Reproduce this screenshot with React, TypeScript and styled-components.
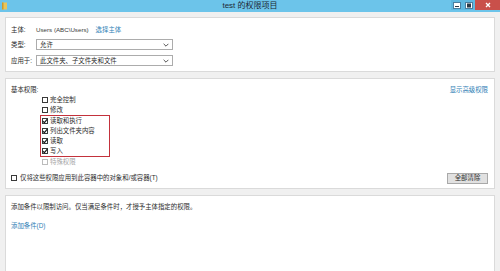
import React from 'react';
import styled, { createGlobalStyle } from 'styled-components';

const GlobalStyle = createGlobalStyle`
    html, body {
        margin: 0;
        padding: 0;
        background: #f0f0f0;
    }
    * {
        box-sizing: border-box;
    }
`

type PermissionType = {
    label: string
    checked: boolean
    disabled?: boolean
}

const topPermissions: PermissionType[] = [
    {label: '完全控制', checked: false},
    {label: '修改', checked: false},
]

const markedPermissions: PermissionType[] = [
    {label: '读取和执行', checked: true},
    {label: '列出文件夹内容', checked: true},
    {label: '读取', checked: true},
    {label: '写入', checked: true},
]

const CheckBox = (props: { checked: boolean, disabled?: boolean }) => (
    <StyledBox $disabled={props.disabled}>
        {props.checked && (
            <svg width="6" height="6" viewBox="0 0 6 6">
                <path d="M0.8 3.1 L2.4 4.6 L5.3 1.2" fill="none" stroke="#1b1b1b" strokeWidth="1.2"/>
            </svg>
        )}
    </StyledBox>
)

const PermissionRow = (props: PermissionType) => (
    <StyledPermRow $disabled={props.disabled}>
        <CheckBox checked={props.checked} disabled={props.disabled}/>
        {props.label}
    </StyledPermRow>
)

const Select = (props: { value: string }) => (
    <StyledSelect>
        <span>{props.value}</span>
        <svg width="6" height="4" viewBox="0 0 6 4">
            <path d="M0.6 0.8 L3 3.2 L5.4 0.8" fill="none" stroke="#555" strokeWidth="1"/>
        </svg>
    </StyledSelect>
)

export default function App() {
    return (
        <>
            <GlobalStyle/>
            <StyledWindow>
                <StyledTitleBar>
                    <StyledFolderIcon>
                        <svg width="5" height="8" viewBox="0 0 5 8">
                            <rect x="0" y="0.5" width="5" height="7" fill="#e8c55a"/>
                            <rect x="0" y="0.5" width="1.5" height="7" fill="#c99a2e"/>
                        </svg>
                    </StyledFolderIcon>
                    <StyledTitle>test 的权限项目</StyledTitle>
                    <StyledControls>
                        <StyledCtrlButton>
                            <svg width="8" height="7" viewBox="0 0 8 7">
                                <rect x="0.5" y="0.5" width="7" height="6" fill="#fff" stroke="#4a7fa0"/>
                                <rect x="2" y="4" width="4" height="1" fill="#2a3a48"/>
                            </svg>
                        </StyledCtrlButton>
                        <StyledCtrlButton>
                            <svg width="8" height="7" viewBox="0 0 8 7">
                                <rect x="0.5" y="0.5" width="7" height="6" fill="#fff" stroke="#4a7fa0"/>
                                <rect x="2" y="1.5" width="4" height="4" fill="#2a3a48"/>
                            </svg>
                        </StyledCtrlButton>
                        <StyledCloseButton>
                            <svg width="6" height="6" viewBox="0 0 6 6">
                                <path d="M1 1 L5 5 M5 1 L1 5" stroke="#fff" strokeWidth="1.3"/>
                            </svg>
                        </StyledCloseButton>
                    </StyledControls>
                </StyledTitleBar>

                <StyledBody>
                    <StyledPanel $padding="6px 5px 5px">
                        <StyledFieldRow $gap={4}>
                            <StyledLabel>主体:</StyledLabel>
                            <StyledValue>Users (ABC\Users)</StyledValue>
                            <StyledLink>选择主体</StyledLink>
                        </StyledFieldRow>
                        <StyledFieldRow $gap={5}>
                            <StyledLabel>类型:</StyledLabel>
                            <Select value="允许"/>
                        </StyledFieldRow>
                        <StyledFieldRow $gap={0}>
                            <StyledLabel>应用于:</StyledLabel>
                            <Select value="此文件夹、子文件夹和文件"/>
                        </StyledFieldRow>
                    </StyledPanel>

                    <StyledPanel $padding="6px 6px 4px 5px">
                        <StyledHeaderRow>
                            <StyledText>基本权限:</StyledText>
                            <StyledLink>显示高级权限</StyledLink>
                        </StyledHeaderRow>
                        <StyledPermList>
                            {topPermissions.map(p => <PermissionRow key={p.label} {...p}/>)}
                            <StyledMarkedGroup>
                                {markedPermissions.map(p => <PermissionRow key={p.label} {...p}/>)}
                            </StyledMarkedGroup>
                            <PermissionRow label="特殊权限" checked={false} disabled/>
                        </StyledPermList>
                        <StyledFooterRow>
                            <StyledInheritRow>
                                <CheckBox checked={false}/>
                                仅将这些权限应用到此容器中的对象和/或容器(T)
                            </StyledInheritRow>
                            <StyledButton>全部清除</StyledButton>
                        </StyledFooterRow>
                    </StyledPanel>

                    <StyledPanel $padding="6px 5px 40px" $grow>
                        <StyledText>添加条件以限制访问。仅当满足条件时，才授予主体指定的权限。</StyledText>
                        <StyledConditionLink>添加条件(D)</StyledConditionLink>
                    </StyledPanel>
                </StyledBody>
            </StyledWindow>
        </>
    );
}

const font = `"Liberation Sans", "Noto Sans CJK SC", sans-serif`

const StyledWindow = styled.div`
    width: 500px;
    height: 271px;
    overflow: hidden;
    display: flex;
    flex-direction: column;
    background: #f0f0f0;
    font-family: ${font};
    font-size: 6.4px;
    line-height: 10px;
    color: #2b2b2b;
`

const StyledTitleBar = styled.div`
    position: relative;
    height: 12px;
    flex-shrink: 0;
    display: flex;
    align-items: center;
    background: #6cc4ea;
    padding-left: 2px;
`

const StyledFolderIcon = styled.div`
    display: flex;
    align-items: center;
    height: 12px;
`

const StyledTitle = styled.div`
    position: absolute;
    left: 0;
    right: 0;
    top: 0;
    text-align: center;
    font-size: 8px;
    line-height: 11px;
    color: #1e2a33;
`

const StyledControls = styled.div`
    position: absolute;
    right: 0;
    top: 0;
    display: flex;
    height: 10px;
`

const StyledCtrlButton = styled.div`
    width: 12px;
    height: 10px;
    display: flex;
    align-items: center;
    justify-content: center;
    background: #5eb8e0;
`

const StyledCloseButton = styled.div`
    width: 25px;
    height: 10px;
    display: flex;
    align-items: center;
    justify-content: center;
    background: #c9504a;
`

const StyledBody = styled.div`
    flex: 1;
    display: flex;
    flex-direction: column;
    gap: 6px;
    padding: 5px 5px 0;
`

const StyledPanel = styled.div<{ $padding: string, $grow?: boolean }>`
    background: #fff;
    border: 1px solid #dadada;
    padding: ${p => p.$padding};
    display: flex;
    flex-direction: column;
    flex-grow: ${p => p.$grow ? 1 : 0};
`

const StyledFieldRow = styled.div<{ $gap: number }>`
    display: flex;
    align-items: center;
    height: 11px;
    margin-bottom: ${p => p.$gap}px;
`

const StyledLabel = styled.span`
    width: 25px;
    flex-shrink: 0;
    color: #2b2b2b;
    white-space: nowrap;
`

const StyledValue = styled.span`
    margin-right: 7px;
    font-size: 6.2px;
    color: #3a3a3a;
`

const StyledLink = styled.span`
    color: #2f80b5;
    white-space: nowrap;
`

const StyledSelect = styled.div`
    width: 137px;
    height: 11px;
    border: 1px solid #acacac;
    background: #fff;
    display: flex;
    align-items: center;
    justify-content: space-between;
    padding: 0 3px 0 3px;
    line-height: 9px;
`

const StyledText = styled.span`
    color: #2b2b2b;
`

const StyledHeaderRow = styled.div`
    display: flex;
    justify-content: space-between;
    align-items: center;
    height: 10px;
`

const StyledPermList = styled.div`
    display: flex;
    flex-direction: column;
    align-items: flex-start;
    padding: 0 0 0 29px;
`

const StyledMarkedGroup = styled.div`
    width: 70px;
    border: 1px solid #c3323c;

    & > div {
        padding-left: 1px;
    }
`

const StyledPermRow = styled.div<{ $disabled?: boolean }>`
    display: flex;
    align-items: center;
    gap: 2px;
    height: 10px;
    padding-left: 2px;
    color: ${p => p.$disabled ? '#a5a5a5' : '#2b2b2b'};
`

const StyledBox = styled.span<{ $disabled?: boolean }>`
    width: 6px;
    height: 6px;
    flex-shrink: 0;
    display: flex;
    align-items: center;
    justify-content: center;
    border: 0.8px solid ${p => p.$disabled ? '#bcbcbc' : '#3a3a3a'};
    background: #fff;
    overflow: visible;

    svg {
        margin: -1px;
    }
`

const StyledFooterRow = styled.div`
    display: flex;
    justify-content: space-between;
    align-items: center;
    height: 12px;
    margin-top: 5px;
`

const StyledInheritRow = styled.div`
    display: flex;
    align-items: center;
    gap: 3px;
`

const StyledButton = styled.div`
    width: 41px;
    height: 11px;
    display: flex;
    align-items: center;
    justify-content: center;
    background: #e1e1e1;
    border: 1px solid #a9a9a9;
    color: #2b2b2b;
`

const StyledConditionLink = styled.span`
    margin-top: 9px;
    color: #2f80b5;
`
